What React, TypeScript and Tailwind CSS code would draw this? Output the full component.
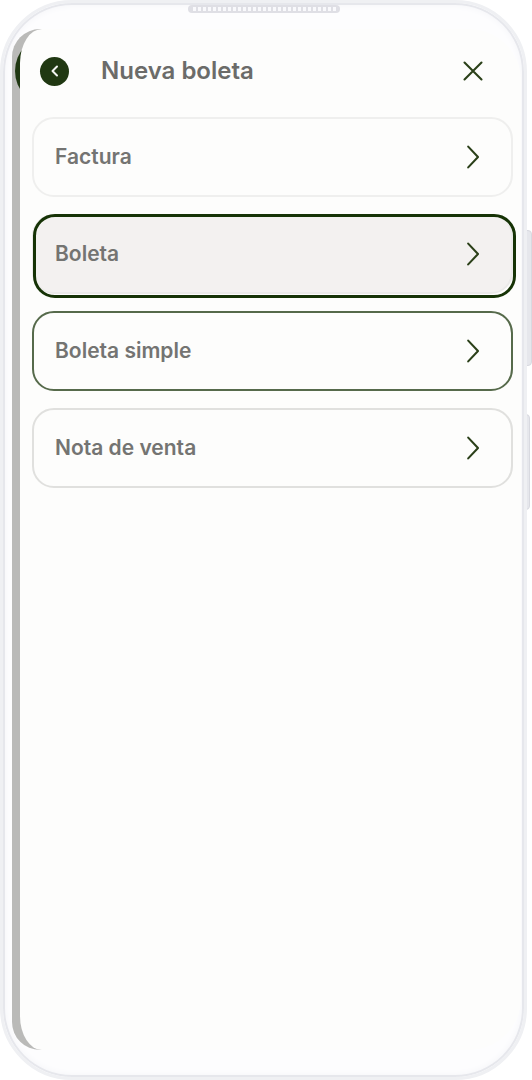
type IconProps = { className?: string }

type DocumentOption = {
  label: string
  card: string
  focused?: boolean
}

const options: DocumentOption[] = [
  { label: 'Factura', card: 'border-[#efefee]' },
  { label: 'Boleta', card: 'border-[#ebeae9] bg-[#f3f1f0]', focused: true },
  { label: 'Boleta simple', card: 'border-[#566a4b]' },
  { label: 'Nota de venta', card: 'border-[#e0e0de]' },
]

const ChevronRight = ({ className }: IconProps) => (
  <svg className={className} viewBox="0 0 14 24" fill="none" stroke="currentColor" strokeWidth="2.1" strokeLinecap="round" strokeLinejoin="round" aria-hidden="true">
    <path d="M2.2 1.6 12 12 2.2 22.4" />
  </svg>
)

const ChevronLeft = ({ className }: IconProps) => (
  <svg className={className} viewBox="0 0 10 12" fill="none" stroke="currentColor" strokeWidth="2" strokeLinecap="round" strokeLinejoin="round" aria-hidden="true">
    <path d="M7 1.5 2.5 6 7 10.5" />
  </svg>
)

const Close = ({ className }: IconProps) => (
  <svg className={className} viewBox="0 0 20 20" fill="none" stroke="currentColor" strokeWidth="2.1" strokeLinecap="round" aria-hidden="true">
    <path d="M1.5 1.5 18.5 18.5M18.5 1.5 1.5 18.5" />
  </svg>
)

const Speaker = () => (
  <svg className="absolute top-0.5 left-1/2 h-2 w-[152px] -translate-x-1/2" viewBox="0 0 152 8" aria-hidden="true">
    <rect width="152" height="8" rx="4" fill="#dfdfe5" />
    <path d="M5 4H148" stroke="#f9f9fc" strokeWidth="4" strokeDasharray="3 2" />
  </svg>
)

const OptionCard = ({ label, card, focused }: DocumentOption) => (
  <div className="relative">
    <button type="button" className={`flex h-20 w-full items-center justify-between rounded-[22px] border-2 pr-[31px] pl-[21px] text-left ${card}`}>
      <span className="text-[21px] font-semibold text-[#747472]">{label}</span>
      <ChevronRight className="h-6 w-3.5 text-[#2b4019]" />
    </button>
    {focused && <span className="pointer-events-none absolute top-0 -right-[3px] -bottom-1 left-px rounded-[22px] border-3 border-[#163306]" />}
  </div>
)

const App = () => {
  return (
    <div className="relative flex min-h-screen bg-white pr-[5px] font-['Inter','Liberation_Sans',sans-serif]">
      <div className="absolute top-[230px] right-0 h-[136px] w-2 rounded-r-sm border border-[#d8d9e0] bg-[#e6e7ec]" />
      <div className="absolute top-[414px] right-[2px] h-24 w-2 rounded-r-sm border border-[#d8d9e0] bg-[#e6e7ec]" />

      <div className="relative flex flex-1 rounded-[72px] border-3 border-[#eff0f3] bg-[#fdfdfe] pt-[26px] pr-[3px] pb-[27px] pl-[9px] shadow-[inset_0_0_0_2px_#e6e7ec,inset_0_0_10px_#f0f1f5]">
        <Speaker />

        <div className="relative flex flex-1 overflow-hidden rounded-l-[28px] pl-2">
          <div className="absolute inset-y-0 left-0 w-12 bg-[#babab8]" />
          <div className="absolute top-[7px] left-[3px] size-[70px] rounded-full bg-[#203812]" />

          <main className="relative flex-1 rounded-l-[22px_34px] rounded-r-[52px] bg-[#fdfdfc] pr-2 pl-3">
            <header className="flex h-[88px] items-center pr-[30px] pb-1 pl-2">
              <button type="button" aria-label="Volver" className="flex size-[29px] items-center justify-center rounded-full bg-[#203812] text-[#f4f5f2]">
                <ChevronLeft className="h-3 w-2.5" />
              </button>
              <h1 className="ml-8 flex-1 text-2xl font-semibold text-[#6b6b69]">Nueva boleta</h1>
              <button type="button" aria-label="Cerrar" className="text-[#2b4019]">
                <Close className="size-5" />
              </button>
            </header>

            <ul className="flex flex-col gap-[17px]">
              {options.map((option) => (
                <li key={option.label}>
                  <OptionCard {...option} />
                </li>
              ))}
            </ul>
          </main>
        </div>
      </div>
    </div>
  )
}

export default App
